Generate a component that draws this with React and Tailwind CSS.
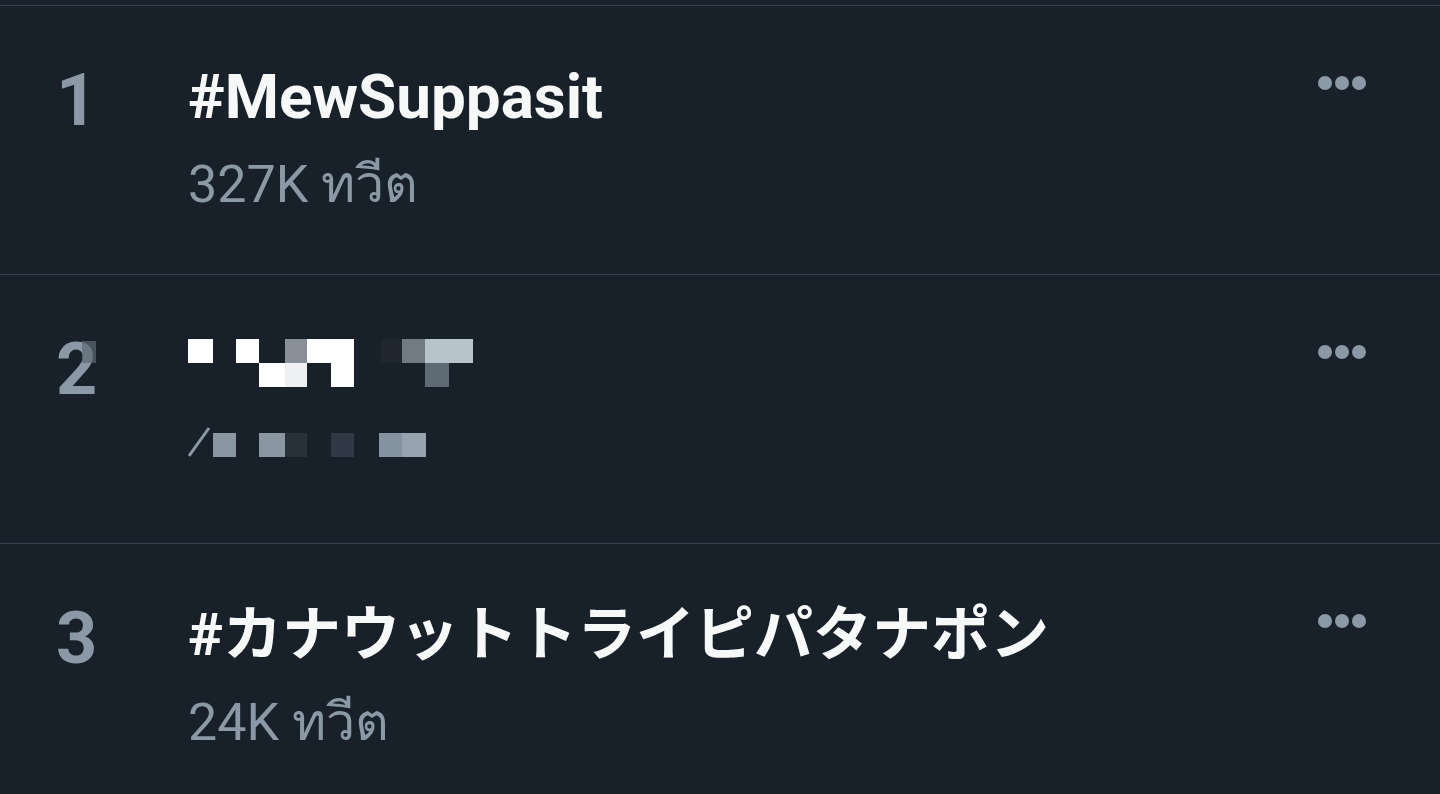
import React from 'react';

const trends = [
  { rank: '1', title: '#MewSuppasit', count: '327K ทวีต' },
  { rank: '2', hidden: true },
  { rank: '3', title: '#カナウットトライピパタナポン', count: '24K ทวีต', cjk: true },
];

// pixelated blocks covering the 2nd trend (x offset from title column, y from row top)
const titleBlocks = [
  { l: 0, w: 25, t: 0, c: '#ffffff' },
  { l: 48, w: 23, t: 0, c: '#ffffff' },
  { l: 97, w: 22, t: 0, c: '#8a9099' },
  { l: 119, w: 47, t: 0, c: '#ffffff' },
  { l: 193, w: 21, t: 0, c: '#1f262f' },
  { l: 214, w: 23, t: 0, c: '#707b84' },
  { l: 237, w: 48, t: 0, c: '#b8c4cc' },
  { l: 71, w: 26, t: 24, c: '#ffffff' },
  { l: 97, w: 22, t: 24, c: '#eef0f2' },
  { l: 143, w: 23, t: 24, c: '#ffffff' },
  { l: 237, w: 24, t: 24, c: '#5f6b74' },
];

const countBlocks = [
  { l: 25, w: 23, c: '#8a97a3' },
  { l: 71, w: 26, c: '#8a96a2' },
  { l: 97, w: 22, c: '#28313a' },
  { l: 143, w: 23, c: '#303845' },
  { l: 191, w: 23, c: '#8593a0' },
  { l: 214, w: 24, c: '#96a3ae' },
];

const MoreDots = () => (
  <div className="flex gap-[3px] mt-[70px]">
    <span className="w-[14px] h-[14px] rounded-full bg-[#8b98a5]" />
    <span className="w-[14px] h-[14px] rounded-full bg-[#8b98a5]" />
    <span className="w-[14px] h-[14px] rounded-full bg-[#8b98a5]" />
  </div>
);

const HiddenTrend = () => (
  <div className="flex flex-col">
    <div className="relative h-[48px] mt-[64px] w-[300px]">
      {titleBlocks.map((b, i) => (
        <div
          key={i}
          className="absolute h-[24px]"
          style={{ left: b.l, width: b.w, top: b.t, background: b.c }}
        />
      ))}
    </div>
    <div className="relative h-[30px] mt-[40px] w-[300px]">
      <svg className="absolute left-0 top-0" width="24" height="30" viewBox="0 0 24 30">
        <path d="M1 29 L21 1" stroke="#8b98a5" strokeWidth="3" fill="none" />
      </svg>
      {countBlocks.map((b, i) => (
        <div
          key={i}
          className="absolute h-[24px] top-[6px]"
          style={{ left: b.l, width: b.w, background: b.c }}
        />
      ))}
    </div>
  </div>
);

const TrendRow = ({ trend }) => (
  <div className="flex items-start h-[269px] border-t border-[#38444d] pl-[56px] pr-[74px]">
    <div className="relative w-[132px] mt-[52px] text-[72px] leading-[86px] font-bold text-[#8b98a5]">
      {trend.rank}
      {trend.hidden && (
        <div className="absolute left-[26px] top-[14px] w-[14px] h-[22px] bg-[#5e6a75] opacity-70" />
      )}
    </div>
    <div className="flex-1">
      {trend.hidden ? (
        <HiddenTrend />
      ) : (
        <div className="flex flex-col">
          <div
            className={
              trend.cjk
                ? 'mt-[55px] text-[59px] leading-[72px] font-bold text-[#f7f9f9]'
                : 'mt-[55px] text-[62px] leading-[72px] font-bold text-[#f7f9f9]'
            }
          >
            {trend.title}
          </div>
          <div className="mt-[21px] text-[52px] leading-[62px] text-[#8b98a5]">
            {trend.count}
          </div>
        </div>
      )}
    </div>
    <MoreDots />
  </div>
);

export default function App() {
  return (
    <div
      className="w-[1440px] h-[794px] overflow-hidden bg-[#18202a]"
      style={{ fontFamily: 'Roboto, "Noto Sans", "Noto Sans CJK JP", sans-serif' }}
    >
      <div className="h-[5px] bg-[#1b212b]" />
      {trends.map((t) => (
        <TrendRow key={t.rank} trend={t} />
      ))}
    </div>
  );
}
